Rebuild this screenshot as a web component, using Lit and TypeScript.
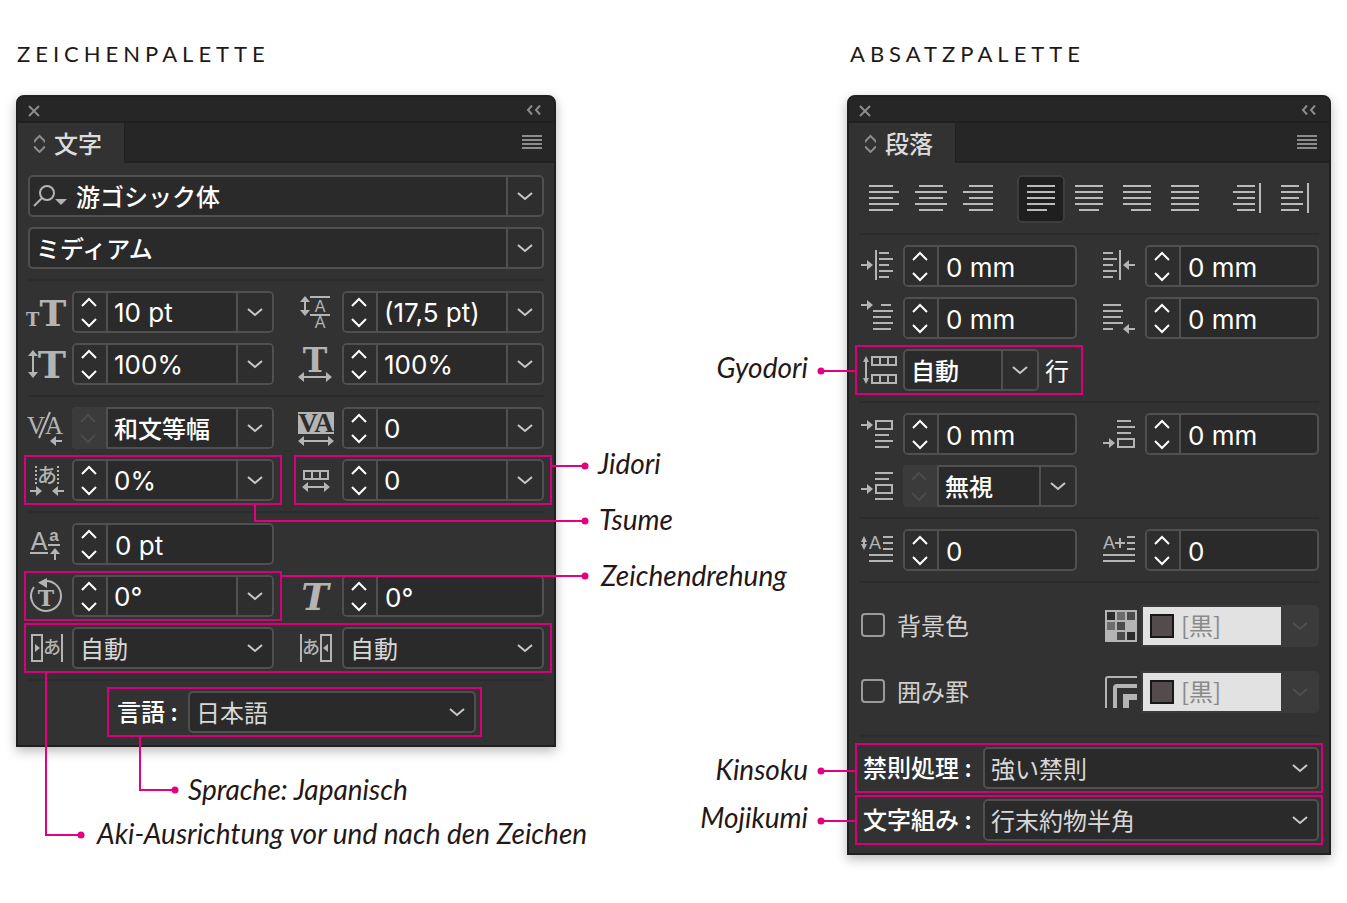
import { LitElement, html, css, svg, nothing } from "lit";
import { customElement, property } from "lit/decorators.js";
import { classMap } from "lit/directives/class-map.js";

/* ---------- icon helpers ---------- */

const line = (x1: number, x2: number, y: number) => svg`<path d="M${x1} ${y}H${x2}" />`;
const lines = (rows: number[][]) => rows.map(([y, a, b]) => line(a, b, y));
const arrowRight = (x: number, y: number) =>
  svg`<path d="M${x} ${y}h7" /><path class="fill" d="M${x + 6} ${y - 5}l6 5l-6 5z" />`;
const arrowLeft = (x: number, y: number) =>
  svg`<path d="M${x} ${y}h-7" /><path class="fill" d="M${x - 6} ${y - 5}l-6 5l6 5z" />`;
const arrowWide = (a: number, b: number, y: number) =>
  svg`<path d="M${a + 4} ${y}H${b - 4}" /><path class="fill" d="M${a} ${y}l6 -5v10zM${b} ${y}l-6 -5v10z" />`;
const arrowTall = (x: number, a: number, b: number, r = 5) =>
  svg`<path d="M${x} ${a + 4}V${b - 4}" /><path class="fill" d="M${x} ${a}l${r} 6h${-2 * r}zM${x} ${b}l${r} -6h${-2 * r}z" />`;
const cells = (x: number, y: number) =>
  svg`<path d="M${x + 1} ${y + 1}h24v8h-24zM${x + 9} ${y + 1}v8M${x + 17} ${y + 1}v8" />`;

const icons: Record<string, unknown> = {
  size: svg`<text class="slab start" x="-2" y="35" font-size="18">T<tspan font-size="36">T</tspan></text>`,
  vscale: svg`${arrowTall(5, 7, 35)}<text class="slab" x="24" y="35" font-size="38">T</text>`,
  leading: svg`${arrowTall(7, 5, 25)}${line(12, 32, 6)}${line(12, 32, 24)}<text class="sans" x="22" y="21" font-size="16">A</text><text class="sans" x="22" y="37" font-size="16">A</text>`,
  hscale: svg`<text class="slab" x="17" y="29" font-size="33">T</text>${arrowWide(0, 34, 34)}`,
  kerning: svg`<text class="serif" x="8" y="27" font-size="25">V</text><text class="serif" x="26" y="27" font-size="25">A</text><path d="M22 5L11 31" />${arrowLeft(34, 34)}<path d="M26 34h8" />`,
  tracking: svg`<path class="fill" d="M0 5h36v22H0z" /><text class="serif knock" x="18" y="25" font-size="27">VA</text>${arrowWide(0, 36, 34)}`,
  tsume: svg`<path d="M8 7v19M30 7v19" stroke-dasharray="2 2" /><text class="kana" x="19" y="24" font-size="20">あ</text>${arrowRight(2, 32)}${arrowLeft(36, 32)}`,
  jidori: svg`${cells(5, 11)}${arrowWide(4, 32, 28)}`,
  baseline: svg`<text class="sans" x="11" y="27" font-size="25">A</text>${line(2, 20, 30)}<text class="sans heavy" x="26" y="18" font-size="17">a</text>${line(20, 32, 22)}<path d="M27 28v9" /><path class="fill" d="M27 25l5 6h-10z" />`,
  rotate: svg`<path d="M17 6A15 15 0 1 1 6 12" /><path class="fill" d="M10 7.500l9 -4.500v10z" /><text class="slab" x="18" y="31" font-size="22">T</text>`,
  italic: svg`<text class="slab slant" x="17" y="35" font-size="37">T</text>`,
  akiBefore: svg`<path d="M4 8h10v26H4zM34 7v28" /><path class="fill" d="M7 17l5 4l-5 4z" /><text class="kana" x="24" y="27" font-size="18">あ</text>`,
  akiAfter: svg`<path d="M23 8h10v26H23zM3 7v28" /><path class="fill" d="M30 17l-5 4l5 4z" /><text class="kana" x="13" y="27" font-size="18">あ</text>`,
  indentLeft: svg`${arrowRight(2, 20)}<path d="M17 5v30" />${lines([[8, 20, 30], [14, 20, 34], [20, 20, 30], [26, 20, 34], [32, 20, 30]])}`,
  indentRight: svg`${lines([[8, 2, 12], [14, 2, 16], [20, 2, 12], [26, 2, 16], [32, 2, 12]])}<path d="M19 5v30" />${arrowLeft(34, 20)}`,
  firstLine: svg`${arrowRight(2, 8)}${lines([[8, 22, 32], [14, 14, 34], [20, 14, 32], [26, 14, 34], [32, 14, 32]])}`,
  lastLine: svg`${lines([[8, 2, 20], [14, 2, 22], [20, 2, 20], [26, 2, 22], [32, 2, 12]])}${arrowLeft(34, 32)}`,
  gyodori: svg`${arrowTall(7, 7, 35, 3)}${cells(12, 7)}${cells(12, 25)}`,
  spaceBefore: svg`${arrowRight(2, 12)}<path d="M17 8h16v8H17z" />${lines([[22, 16, 30], [28, 16, 34], [34, 16, 30]])}`,
  spaceBetween: svg`${arrowRight(2, 24)}<path d="M17 20h16v8H17z" />${lines([[8, 16, 34], [14, 16, 30], [34, 16, 34]])}`,
  spaceAfter: svg`${arrowRight(2, 30)}<path d="M17 26h16v8H17z" />${lines([[8, 16, 30], [14, 16, 34], [20, 16, 30]])}`,
  dropLines: svg`${arrowTall(5, 7, 21, 3)}<text class="sans" x="16" y="20" font-size="18">A</text>${lines([[8, 24, 34], [14, 24, 34], [20, 24, 34], [26, 10, 34], [32, 10, 34]])}`,
  dropChars: svg`<text class="sans" x="8" y="20" font-size="18">A</text><path d="M19 9v10" />${lines([[14, 14, 24], [8, 26, 34], [14, 26, 34], [20, 26, 34], [26, 2, 34], [32, 2, 34]])}`,
  shade: svg`<path class="fill" d="M4 5h32v32H4z" /><path class="c1" d="M6 7h8v8H6zM26 27h8v8h-8z" /><path class="c2" d="M16 7h8v8h-8zM6 17h8v8H6z" /><path class="c3" d="M26 7h8v8h-8zM16 17h8v8h-8zM16 27h8v8h-8z" />`,
  frame: svg`<path d="M5 37V8q0 -2 2 -2H36" /><path d="M14 37V17q0 -2 2 -2H36" stroke-width="4" /><path d="M25 37V26H36" stroke-width="6" />`,
};

const icon = (name: string) =>
  html`<svg class="icon" width="36" height="42" viewBox="0 0 36 42" aria-hidden="true">${icons[name]}</svg>`;

const chevron = (d: string) =>
  html`<svg class="chevron" width="16" height="10" viewBox="0 0 16 10" aria-hidden="true"><path d=${d} /></svg>`;
const chevronDown = chevron("M1 2L8 8L15 2");
const stepUp = chevron("M0 8L7 1L14 8");
const stepDown = chevron("M0 2L7 9L14 2");

/* ---------- form controls ---------- */

interface FieldOptions {
  stepper?: boolean | "off";
  menu?: boolean;
  search?: boolean;
}

const field = (label: string, value: string, { stepper = true, menu = false, search = false }: FieldOptions = {}) => html`
  <div class="control">
    ${stepper
      ? html`<div class=${classMap({ stepper: true, off: stepper === "off" })}>
          <button aria-label="${label} +" ?disabled=${stepper === "off"}>${stepUp}</button>
          <button aria-label="${label} −" ?disabled=${stepper === "off"}>${stepDown}</button>
        </div>`
      : nothing}
    ${search
      ? html`<svg class="search" width="36" height="26" viewBox="0 0 36 26" aria-hidden="true">
          <circle cx="15" cy="10" r="7" /><path d="M10 15L2 23" /><path class="fill" d="M23 16h12l-6 6z" />
        </svg>`
      : nothing}
    <input class=${classMap({ plain: !menu })} type="text" aria-label=${label} .value=${value} />
    ${menu ? html`<button class="open" aria-label="${label} ▾">${chevronDown}</button>` : nothing}
  </div>
`;

const choice = (label: string, value: string, id = "") => html`
  <div class="control choice">
    <select id=${id || nothing} aria-label=${label}><option>${value}</option></select>
    ${chevronDown}
  </div>
`;

const swatch = (label: string) => html`
  <div class="swatch">
    <span class="chip"></span>
    <select disabled aria-label=${label}><option>[黒]</option></select>
    <span class="arrow">${chevronDown}</span>
  </div>
`;

/* A callout: leader line, end dot and label, measured from the framed group. */
const callout = (name: string, text: string, d: string, x: number, y: number) => html`
  <svg class="leader" width="1" height="1" aria-hidden="true">
    <path d=${d} /><circle cx=${x} cy=${y} r="3.5" />
  </svg>
  <span class="callout ${name}">${text}</span>
`;

const alignments: { label: string; rows: number[][]; bar?: boolean; gap?: boolean; active?: boolean }[] = [
  { label: "左揃え", rows: [[11, 10, 34], [17, 10, 40], [23, 10, 34], [29, 10, 40], [35, 10, 34]] },
  { label: "中央揃え", rows: [[11, 12, 36], [17, 8, 40], [23, 12, 36], [29, 8, 40], [35, 12, 36]] },
  { label: "右揃え", rows: [[11, 14, 38], [17, 8, 38], [23, 14, 38], [29, 8, 38], [35, 14, 38]] },
  { label: "均等配置(最終行左揃え)", gap: true, active: true, rows: [[11, 10, 38], [17, 10, 38], [23, 10, 38], [29, 10, 38], [35, 10, 30]] },
  { label: "均等配置(最終行中央揃え)", rows: [[11, 10, 38], [17, 10, 38], [23, 10, 38], [29, 10, 38], [35, 14, 34]] },
  { label: "均等配置(最終行右揃え)", rows: [[11, 10, 38], [17, 10, 38], [23, 10, 38], [29, 10, 38], [35, 18, 38]] },
  { label: "両端揃え", rows: [[11, 10, 38], [17, 10, 38], [23, 10, 38], [29, 10, 38], [35, 10, 38]] },
  { label: "ノド元に向かって整列", gap: true, bar: true, rows: [[11, 14, 32], [17, 10, 32], [23, 14, 32], [29, 10, 32], [35, 14, 32]] },
  { label: "小口に向かって整列", bar: true, rows: [[11, 10, 28], [17, 10, 32], [23, 10, 28], [29, 10, 32], [35, 10, 28]] },
];

/* ---------- palette window ---------- */

@customElement("palette-panel")
export class PalettePanel extends LitElement {
  @property() label = "";

  static styles = css`
    :host {
      display: block;
      box-sizing: border-box;
      border: 2px solid #202020;
      border-radius: 8px 8px 0 0;
      background: #323232;
      box-shadow: 0 4px 12px rgba(0, 0, 0, 0.28);
    }
    button {
      display: flex;
      padding: 0;
      border: 0;
      background: none;
    }
    svg {
      display: block;
      fill: none;
      stroke: #8c8c8c;
      stroke-width: 2;
    }
    .title {
      display: flex;
      justify-content: space-between;
      align-items: center;
      box-sizing: border-box;
      height: 26px;
      padding: 4px 12px 0 10px;
      border-bottom: 2px solid #202020;
      border-radius: 6px 6px 0 0;
      background: #262626;
    }
    .tabs {
      display: flex;
      justify-content: space-between;
      height: 40px;
      background: #262626;
      box-shadow: inset 0 -2px #212121;
    }
    .tab {
      display: flex;
      align-items: center;
      gap: 9px;
      box-sizing: border-box;
      min-width: 107px;
      padding: 0 14px 0 16px;
      background: #323232;
      border-right: 1px solid #212121;
      color: #dcdcdc;
      font: 500 24px/32px "Noto Sans CJK JP", sans-serif;
    }
    .menu {
      align-self: center;
      margin-right: 12px;
    }
    .body {
      display: flex;
      flex-direction: column;
      gap: 10px;
      padding: 12px 10px;
    }
  `;

  render() {
    return html`
      <div class="title">
        <button aria-label="閉じる"><svg width="12" height="12" viewBox="0 0 12 12"><path d="M1 1L11 11M11 1L1 11" /></svg></button>
        <button aria-label="折りたたむ"><svg width="16" height="12" viewBox="0 0 16 12"><path d="M6 0.500L2 5L6 9.500M14 0.500L10 5L14 9.500" /></svg></button>
      </div>
      <div class="tabs">
        <div class="tab">
          <svg width="11" height="20" viewBox="0 0 11 20"><path d="M0.500 9.500V8L5.500 3L10.500 8V9.500M0.500 13V14L5.500 19L10.500 14V13" /></svg>
          ${this.label}
        </div>
        <button class="menu" aria-label="メニュー"><svg width="20" height="16" viewBox="0 0 20 16"><path d="M0 1H20M0 5H20M0 9H20M0 13H20" /></svg></button>
      </div>
      <div class="body"><slot></slot></div>
    `;
  }
}

@customElement("app-root")
export class AppRoot extends LitElement {
  static styles = css`
    :host {
      display: block;
      min-height: 100vh;
      background: #fff;
      color: #231815;
    }
    main {
      display: flex;
      justify-content: space-between;
      align-items: flex-start;
      padding: 38px 16px 0;
    }
    section {
      min-width: 0;
    }
    .character {
      flex: 0 1 540px;
    }
    .paragraph {
      flex: 0 1 484px;
    }
    h2 {
      margin: 0 0 25px 1px;
      font: 400 22px/32px Lato, sans-serif;
      letter-spacing: 5px;
    }
    .paragraph h2 {
      margin-left: 3px;
    }

    hr {
      width: 100%;
      height: 2px;
      margin: 0;
      border: 0;
      background: #2c2c2c;
    }
    .row {
      display: grid;
      grid-template-columns: 1fr 1fr;
      gap: 24px;
    }
    .cell {
      display: flex;
      align-items: center;
      gap: 8px;
      min-width: 0;
    }
    .cell .control {
      flex: 1;
    }

    /* icons */
    .icon {
      flex: none;
      display: block;
      overflow: visible;
      fill: none;
      stroke: #b4b4b4;
      stroke-width: 2;
    }
    .icon text,
    .fill {
      fill: #b4b4b4;
      stroke: none;
      text-anchor: middle;
    }
    .icon .slab {
      font-family: "DejaVu Serif", serif;
      font-weight: 700;
    }
    .icon .start {
      text-anchor: start;
    }
    .icon .slant {
      font-style: italic;
    }
    .icon .sans {
      font-family: "Liberation Sans", sans-serif;
    }
    .icon .heavy {
      font-weight: 700;
    }
    .icon .serif {
      font-family: "Liberation Serif", serif;
    }
    .icon .knock {
      fill: #2e2e2e;
      font-weight: 700;
    }
    .icon .kana {
      font-family: "Noto Sans CJK JP", sans-serif;
      font-weight: 500;
    }
    .c1 {
      fill: #2c2c2c;
      stroke: none;
    }
    .c2 {
      fill: #6c6c6c;
      stroke: none;
    }
    .c3 {
      fill: #4b4b4b;
      stroke: none;
    }
    .chevron {
      flex: none;
      display: block;
      overflow: visible;
      fill: none;
      stroke: #c8c8c8;
      stroke-width: 2;
      pointer-events: none;
    }

    /* controls */
    button {
      display: flex;
      align-items: center;
      justify-content: center;
      padding: 0;
      border: 0;
      background: none;
    }
    .control {
      display: flex;
      box-sizing: border-box;
      height: 42px;
      min-width: 0;
      border: 2px solid #505050;
      border-radius: 5px;
      background: #2a2a2a;
    }
    .stepper {
      flex: none;
      display: grid;
      grid-template-rows: 1fr 1fr;
      width: 32px;
      border-right: 2px solid #505050;
      background: #2e2e2e;
      border-radius: 3px 0 0 3px;
    }
    .stepper .chevron {
      stroke: #fff;
    }
    .stepper.off {
      width: 34px;
      margin: -2px 0 -2px -2px;
      padding: 2px 0;
      border-radius: 5px 0 0 5px;
      background: #3b3b3b;
    }
    .stepper.off .chevron {
      stroke: #4c4c4c;
    }
    .open {
      flex: none;
      width: 36px;
      border-left: 2px solid #505050;
      background: #2e2e2e;
      border-radius: 0 3px 3px 0;
    }
    .search {
      flex: none;
      align-self: center;
      margin: 0 2px;
      fill: none;
      stroke: #b4b4b4;
      stroke-width: 2;
    }
    input[type="text"] {
      flex: 1;
      min-width: 0;
      width: 0;
      padding: 1px 6px 0;
      border: 0;
      outline: 0;
      background: none;
      color: #fff;
      font: 400 26px/36px Inter, "Noto Sans CJK JP", sans-serif;
    }
    input[type="text"].plain {
      padding: 3px 7px 0;
    }
    .kanji input[type="text"] {
      padding: 0 6px 1px;
      font: 500 24px/36px "Noto Sans CJK JP", sans-serif;
    }
    .choice {
      display: grid;
      grid-template-columns: 1fr;
      align-items: center;
    }
    .choice > * {
      grid-area: 1 / 1;
    }
    .choice .chevron {
      justify-self: end;
      margin-right: 9px;
    }
    select {
      appearance: none;
      min-width: 0;
      width: 100%;
      height: 38px;
      padding: 0 32px 1px 6px;
      border: 0;
      background: none;
      color: #d8d8d8;
      font: 400 24px/36px "Noto Sans CJK JP", sans-serif;
    }

    .align {
      display: flex;
    }
    .align button {
      flex: 0 0 48px;
      height: 48px;
      border-radius: 5px;
    }
    .align .gap {
      margin-left: 14px;
    }
    .align .active {
      background: #1f1f1f;
      box-shadow: inset 0 0 0 2px #3e3e3e;
    }
    .align svg {
      display: block;
      fill: none;
      stroke: #bababa;
      stroke-width: 2;
    }

    .fills {
      display: grid;
      gap: 24px;
      padding: 12px 0;
    }
    .check {
      display: flex;
      align-items: center;
      gap: 12px;
      padding: 0 0 2px 2px;
      color: #d0d0d0;
      font: 400 24px/40px "Noto Sans CJK JP", sans-serif;
    }
    input[type="checkbox"] {
      appearance: none;
      box-sizing: border-box;
      width: 24px;
      height: 24px;
      margin: 0;
      border: 2px solid #9a9a9a;
      border-radius: 4px;
    }
    .fills .cell {
      gap: 4px;
    }
    .swatch {
      flex: 1;
      display: flex;
      align-items: center;
      box-sizing: border-box;
      height: 42px;
      min-width: 0;
      padding: 2px 0 2px 2px;
      border-radius: 0 5px 5px 0;
      background: linear-gradient(#e2e2e2, #e2e2e2) 2px 2px / calc(100% - 40px) 38px no-repeat #3b3b3b;
    }
    .chip {
      flex: none;
      box-sizing: border-box;
      width: 24px;
      height: 24px;
      margin-left: 7px;
      border: 2px solid #181818;
      background: #544c4c;
    }
    .swatch select {
      flex: 1;
      padding: 0 6px 2px 7px;
      color: #8a8a8a;
      opacity: 1;
    }
    .swatch .arrow {
      flex: none;
      display: flex;
      justify-content: center;
      width: 38px;
    }
    .swatch .chevron {
      stroke: #505050;
    }

    .unit {
      width: 34px;
      color: #fff;
      font: 400 24px/40px "Noto Sans CJK JP", sans-serif;
    }
    .cell.gyodori {
      justify-self: start;
      width: 220px;
    }
    .gyodori .unit {
      margin-left: -2px;
    }
    .named {
      display: grid;
      grid-template-columns: 120px 1fr;
      padding-left: 4px;
      color: #fff;
      font: 500 24px/40px "Noto Sans CJK JP", sans-serif;
    }
    .language {
      grid-template-columns: 71px 288px;
      align-self: start;
      margin-left: 83px;
      padding: 0 2px 0 6px;
    }

    /* framed groups and their callouts */
    .mark {
      position: relative;
    }
    .mark::before {
      content: "";
      position: absolute;
      inset: -4px;
      border: 2px solid #d6007a;
      pointer-events: none;
      z-index: 1;
    }
    .roomy::before {
      right: -8px;
    }
    .leader {
      position: absolute;
      left: 0;
      top: 0;
      z-index: 2;
      overflow: visible;
      fill: none;
      stroke: #e4007f;
      stroke-width: 2;
      pointer-events: none;
    }
    .leader circle {
      fill: #e4007f;
      stroke: none;
    }
    .callout {
      position: absolute;
      color: #231815;
      font: italic 400 28px/32px Lato, sans-serif;
      white-space: nowrap;
    }
    .jidori-note {
      left: 300px;
      top: -12px;
    }
    .tsume-note {
      left: 571px;
      top: 44px;
    }
    .rotation-note {
      left: 573px;
      top: -16px;
    }
    .language-note {
      left: 77px;
      top: 82px;
    }
    .aki-note {
      left: 69px;
      top: 190px;
    }
    .left-note {
      right: calc(100% + 51px);
      top: 2px;
    }
    .kinsoku-note {
      right: calc(100% + 51px);
      top: 6px;
    }
  `;

  private character() {
    return html`
      <palette-panel label="文字">
        <div class="kanji">${field("フォント", "游ゴシック体", { stepper: false, menu: true, search: true })}</div>
        <div class="kanji">${field("スタイル", "ミディアム", { stepper: false, menu: true })}</div>
        <hr />
        <div class="row">
          <div class="cell">${icon("size")}${field("サイズ", "10 pt", { menu: true })}</div>
          <div class="cell">${icon("leading")}${field("行送り", "(17,5 pt)", { menu: true })}</div>
        </div>
        <div class="row">
          <div class="cell">${icon("vscale")}${field("垂直比率", "100%", { menu: true })}</div>
          <div class="cell">${icon("hscale")}${field("水平比率", "100%", { menu: true })}</div>
        </div>
        <hr />
        <div class="row">
          <div class="cell kanji">${icon("kerning")}${field("カーニング", "和文等幅", { stepper: "off", menu: true })}</div>
          <div class="cell">${icon("tracking")}${field("トラッキング", "0", { menu: true })}</div>
        </div>
        <div class="row">
          <div class="cell mark roomy">
            ${icon("tsume")}${field("文字ツメ", "0%", { menu: true })}
            ${callout("tsume-note", "Tsume", "M227 45V62H557", 557, 62)}
          </div>
          <div class="cell mark roomy">
            ${icon("jidori")}${field("字取り", "0", { menu: true })}
            ${callout("jidori-note", "Jidori", "M253 7H287", 287, 7)}
          </div>
        </div>
        <hr />
        <div class="row">
          <div class="cell">${icon("baseline")}${field("ベースラインシフト", "0 pt")}</div>
        </div>
        <div class="row">
          <div class="cell mark roomy">
            ${icon("rotate")}${field("文字回転", "0°", { menu: true })}
            ${callout("rotation-note", "Zeichendrehung", "M253 1H557", 557, 1)}
          </div>
          <div class="cell">${icon("italic")}${field("歪み", "0°")}</div>
        </div>
        <div class="row mark roomy">
          <div class="cell">${icon("akiBefore")}${choice("文字前のアキ量", "自動")}</div>
          <div class="cell">${icon("akiAfter")}${choice("文字後のアキ量", "自動")}</div>
          ${callout("aki-note", "Aki-Ausrichtung vor und nach den Zeichen", "M18 45V208H53", 53, 208)}
        </div>
        <hr />
        <div class="named language mark">
          <label for="language">言語 :</label>${choice("言語", "日本語", "language")}
          ${callout("language-note", "Sprache: Japanisch", "M29 45V99H64", 64, 99)}
        </div>
      </palette-panel>
    `;
  }

  private paragraph() {
    return html`
      <palette-panel label="段落">
        <div class="align">
          ${alignments.map(
            (a) => html`<button class=${classMap({ gap: !!a.gap, active: !!a.active })} aria-label=${a.label}>
              <svg width="48" height="48" viewBox="0 0 48 48">${lines(a.rows)}${a.bar ? svg`<path d="M37 8V38" />` : nothing}</svg>
            </button>`
          )}
        </div>
        <hr />
        <div class="row">
          <div class="cell">${icon("indentLeft")}${field("左インデント", "0 mm")}</div>
          <div class="cell">${icon("indentRight")}${field("右インデント", "0 mm")}</div>
        </div>
        <div class="row">
          <div class="cell">${icon("firstLine")}${field("1行目左インデント", "0 mm")}</div>
          <div class="cell">${icon("lastLine")}${field("最終行の右インデント", "0 mm")}</div>
        </div>
        <div class="row">
          <div class="cell gyodori mark kanji">
            ${icon("gyodori")}${field("行取り", "自動", { stepper: false, menu: true })}
            <span class="unit">行</span>
            ${callout("left-note", "Gyodori", "M-4 22H-38", -38, 22)}
          </div>
        </div>
        <hr />
        <div class="row">
          <div class="cell">${icon("spaceBefore")}${field("段落前のアキ", "0 mm")}</div>
          <div class="cell">${icon("spaceAfter")}${field("段落後のアキ", "0 mm")}</div>
        </div>
        <div class="row">
          <div class="cell kanji">${icon("spaceBetween")}${field("段落間のアキ", "無視", { stepper: "off", menu: true })}</div>
        </div>
        <hr />
        <div class="row">
          <div class="cell">${icon("dropLines")}${field("行のドロップキャップ数", "0")}</div>
          <div class="cell">${icon("dropChars")}${field("1またはそれ以上の文字のドロップキャップ", "0")}</div>
        </div>
        <hr />
        <div class="fills">
          <div class="row">
            <label class="check"><input type="checkbox" />背景色</label>
            <div class="cell">${icon("shade")}${swatch("背景色")}</div>
          </div>
          <div class="row">
            <label class="check"><input type="checkbox" />囲み罫</label>
            <div class="cell">${icon("frame")}${swatch("囲み罫")}</div>
          </div>
        </div>
        <hr />
        <div class="named mark">
          <label for="kinsoku">禁則処理 :</label>${choice("禁則処理", "強い禁則", "kinsoku")}
          ${callout("kinsoku-note", "Kinsoku", "M-4 24H-38", -38, 24)}
        </div>
        <div class="named mark">
          <label for="mojikumi">文字組み :</label>${choice("文字組み", "行末約物半角", "mojikumi")}
          ${callout("left-note", "Mojikumi", "M-4 22H-38", -38, 22)}
        </div>
      </palette-panel>
    `;
  }

  render() {
    return html`
      <main>
        <section class="character">
          <h2>ZEICHENPALETTE</h2>
          ${this.character()}
        </section>
        <section class="paragraph">
          <h2>ABSATZPALETTE</h2>
          ${this.paragraph()}
        </section>
      </main>
    `;
  }
}
